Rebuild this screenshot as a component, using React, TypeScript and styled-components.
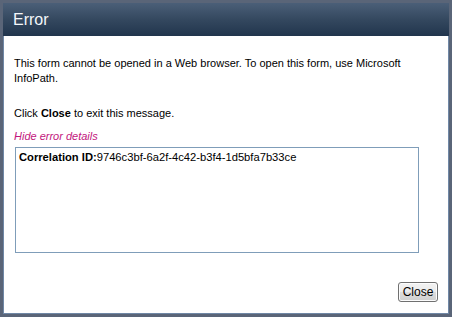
import styled, { createGlobalStyle } from "styled-components";

const GlobalStyle = createGlobalStyle`
  html, body {
    margin: 0;
    padding: 0;
    background: #5a6578;
  }
  body {
    font-family: "Liberation Sans", Arial, sans-serif;
  }
`;

const Frame = styled.div`
  width: 452px;
  height: 317px;
  box-sizing: border-box;
  padding: 3px;
  background: #5a6578;
`;

const Dialog = styled.div`
  height: 100%;
  box-sizing: border-box;
  display: flex;
  flex-direction: column;
  background: #ffffff;
  border: 1px solid #7088a6;
  border-top: none;
`;

const TitleBar = styled.div`
  height: 33px;
  flex: none;
  display: flex;
  align-items: center;
  padding-left: 10px;
  margin: 0 -1px;
  background: linear-gradient(to bottom, #4b5f78 0%, #34485f 50%, #21354d 100%);
  color: #f4f7fa;
  font-size: 16px;
  line-height: 1;
`;

const Body = styled.div`
  flex: 1;
  display: flex;
  flex-direction: column;
  padding: 20px 29px 11px 10px;
  font-size: 11px;
  line-height: 15px;
  color: #000000;
`;

const Message = styled.p<{ $gap?: number }>`
  margin: 0 0 ${(p) => p.$gap ?? 0}px 0;
`;

const DetailsToggle = styled.a`
  display: block;
  color: #c2167c;
  font-style: italic;
  text-decoration: none;
  cursor: pointer;
  margin-bottom: 3px;
`;

const DetailsBox = styled.div`
  height: 106px;
  box-sizing: border-box;
  margin-left: 1px;
  padding: 2px 3px;
  border: 1px solid #7f9db9;
  background: #ffffff;
  font-size: 11.2px;
`;

const Footer = styled.div`
  margin-top: auto;
  display: flex;
  justify-content: flex-end;
  margin-right: -19px;
`;

const Button = styled.button`
  width: 40px;
  height: 20px;
  padding: 0;
  border: 1px solid #707070;
  border-radius: 3px;
  background: linear-gradient(to bottom, #f2f2f2 0%, #ebebeb 50%, #dddddd 51%, #cfcfcf 100%);
  font-family: "Liberation Sans", Arial, sans-serif;
  font-size: 12px;
  color: #000000;
  box-shadow: inset 0 0 0 1px #fcfcfc;
`;

export default function App() {
  return (
    <Frame>
      <GlobalStyle />
      <Dialog>
        <TitleBar>Error</TitleBar>
        <Body>
          <Message $gap={20}>
            This form cannot be opened in a Web browser. To open this form, use Microsoft
            InfoPath.
          </Message>
          <Message $gap={8}>
            Click <b>Close</b> to exit this message.
          </Message>
          <DetailsToggle>Hide error details</DetailsToggle>
          <DetailsBox>
            <b>Correlation ID:</b>9746c3bf-6a2f-4c42-b3f4-1d5bfa7b33ce
          </DetailsBox>
          <Footer>
            <Button>Close</Button>
          </Footer>
        </Body>
      </Dialog>
    </Frame>
  );
}
